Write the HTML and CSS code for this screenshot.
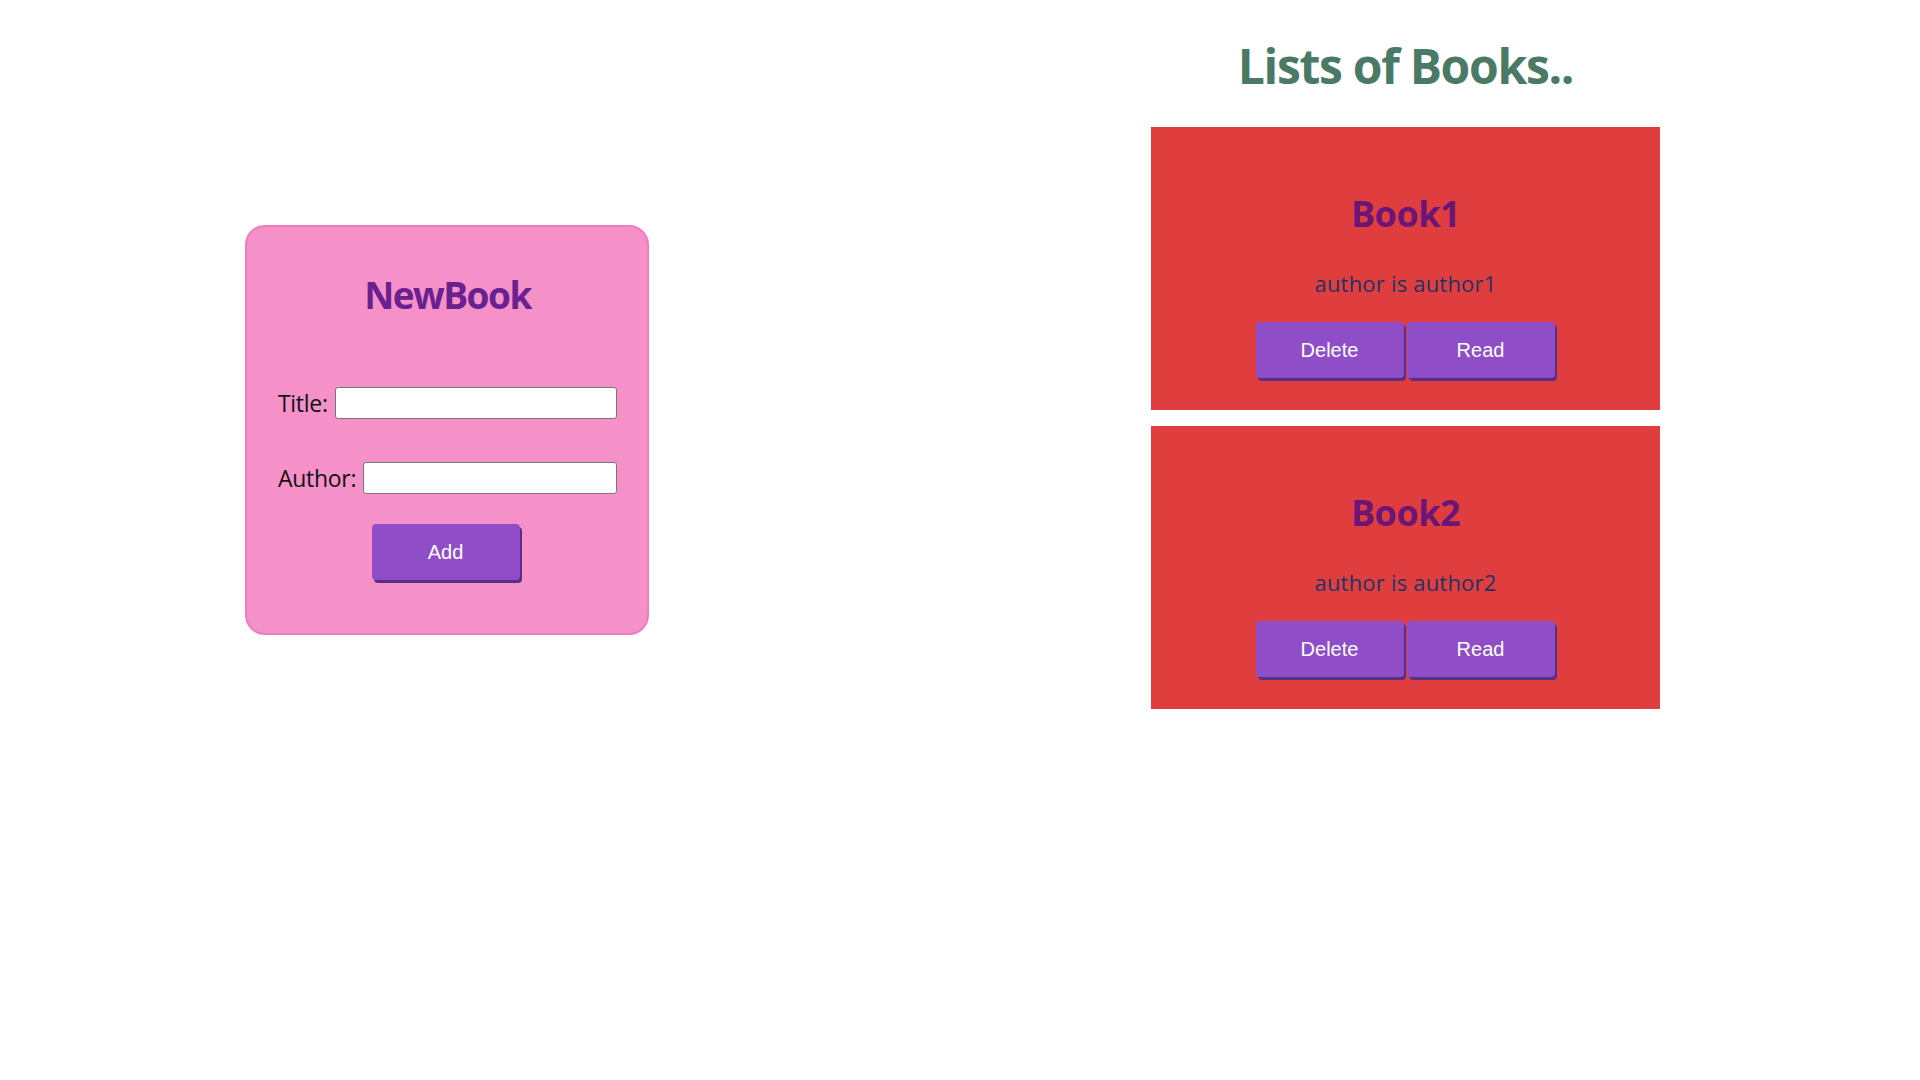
FILE: index.html
```html
<!DOCTYPE html>
<html lang="en">
<head>
<meta charset="utf-8">
<title>Books</title>
<link rel="stylesheet" href="styles.css">
</head>
<body>
<div class="app">
  <section class="form-col">
    <div class="form-card">
      <h2 class="form-title">NewBook</h2>
      <div class="field">
        <label class="field-label" for="title">Title:</label>
        <input class="field-input" id="title" type="text">
      </div>
      <div class="field field-author">
        <label class="field-label" for="author">Author:</label>
        <input class="field-input" id="author" type="text">
      </div>
      <div class="form-actions">
        <button class="btn btn-add" type="button">Add</button>
      </div>
    </div>
  </section>
  <section class="list-col">
    <h1 class="list-title">Lists of Books..</h1>
    <div class="book">
      <h2 class="book-title">Book1</h2>
      <p class="book-author">author is author1</p>
      <div class="book-actions">
        <button class="btn" type="button">Delete</button>
        <button class="btn" type="button">Read</button>
      </div>
    </div>
    <div class="book">
      <h2 class="book-title">Book2</h2>
      <p class="book-author">author is author2</p>
      <div class="book-actions">
        <button class="btn" type="button">Delete</button>
        <button class="btn" type="button">Read</button>
      </div>
    </div>
  </section>
</div>
</body>
</html>
```
FILE: styles.css
```css
* { box-sizing: border-box; }
html, body { margin: 0; padding: 0; background: #ffffff; }
body {
  font-family: "Open Sans", "Noto Sans", sans-serif;
  color: #000;
}
.app {
  display: flex;
  align-items: flex-start;
  padding-left: 245px;
}
.form-col {
  margin-top: 225px;
}
.form-card {
  width: 404px;
  height: 410px;
  background: #f590c9;
  border: 2px solid #f07cc0;
  border-radius: 20px;
  padding: 45px 30px 0 31px;
}
.form-title {
  margin: 0;
  text-align: center;
  font-size: 37px;
  line-height: 46px;
  font-weight: 700;
  color: #6a2190;
  letter-spacing: -1.5px;
}
.field {
  display: flex;
  align-items: center;
  gap: 7px;
  margin-top: 69px;
  height: 32px;
}
.field-author { margin-top: 43px; }
.field-label {
  font-size: 23px;
  line-height: 32px;
  color: #111;
  letter-spacing: -0.3px;
}
.field-input {
  flex: 1;
  min-width: 0;
  height: 32px;
  border: 1px solid #767676;
  border-radius: 3px;
  background: #fff;
  padding: 2px 4px;
  font-size: 18px;
}
.form-actions {
  display: flex;
  justify-content: center;
  margin-top: 30px;
  padding-right: 4px;
}
.btn {
  width: 148px;
  height: 56px;
  border: none;
  border-radius: 4px;
  background: #8f4ec7;
  box-shadow: 2px 3px 0 #5a2e86;
  color: #fff;
  font-family: "Liberation Sans", Arial, sans-serif;
  font-size: 20px;
  padding: 0;
  cursor: pointer;
}
.list-col {
  margin-left: 502px;
  width: 509px;
  display: flex;
  flex-direction: column;
  gap: 16px;
}
.list-title {
  margin: 36px 0 15px;
  text-align: center;
  font-size: 48px;
  line-height: 60px;
  font-weight: 700;
  color: #4a7a66;
  letter-spacing: -1.3px;
}
.book {
  background: #e03e3e;
  height: 283px;
  padding-top: 65px;
  text-align: center;
}
.book-title {
  margin: 0;
  font-size: 36px;
  line-height: 44px;
  font-weight: 700;
  color: #6b1577;
  letter-spacing: -0.5px;
}
.book-author {
  margin: 33px 0 0;
  font-size: 22px;
  line-height: 28px;
  color: #1e3366;
  letter-spacing: 0.2px;
}
.book-actions {
  display: flex;
  justify-content: center;
  gap: 3px;
  margin-top: 25px;
  padding-right: 1px;
}
```
